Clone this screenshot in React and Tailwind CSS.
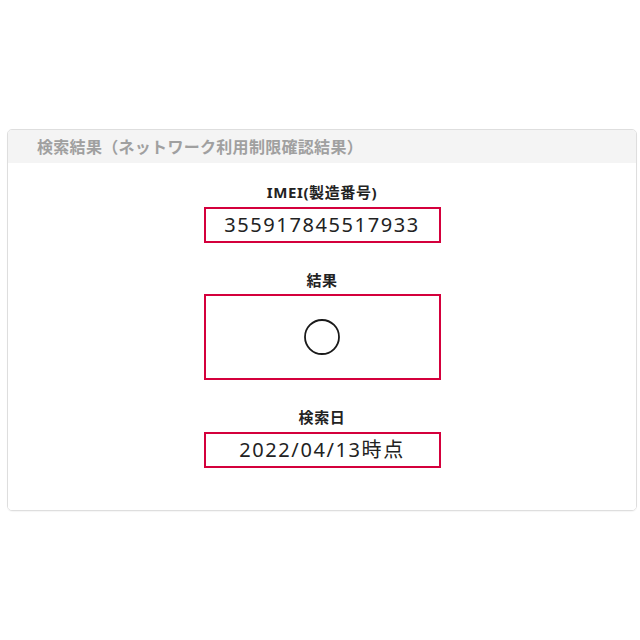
import React from "react";

const rows = [
  { label: "IMEI(製造番号)", value: "355917845517933", gap: "" },
  { label: "結果", value: null, gap: "mt-[27px]" },
  { label: "検索日", value: "2022/04/13時点", gap: "mt-[27px]" },
];

export default function App() {
  return (
    <div
      className="w-[640px] h-[640px] bg-white pt-[129px] pl-[7px]"
      style={{ fontFamily: '"Noto Sans", "Noto Sans CJK JP", sans-serif' }}
    >
      <div className="w-[630px] border border-[#dedede] rounded-[5px] overflow-hidden shadow-[0_1px_1px_rgba(0,0,0,0.04)]">
        {/* ヘッダー */}
        <div className="h-[33px] bg-[#f4f4f4] pl-[29px] flex items-center text-[16px] font-bold text-[#a0a0a0] tracking-[0.3px]">
          検索結果（ネットワーク利用制限確認結果）
        </div>

        {/* 結果 */}
        <div className="flex flex-col items-center pt-[19px] pb-[42px] bg-white">
          {rows.map((row, i) => (
            <div key={i} className={"flex flex-col items-center " + row.gap}>
              <div className="h-[20px] leading-[20px] text-[15px] font-bold text-[#222] tracking-[0.6px]">
                {row.label}
              </div>
              {row.value ? (
                <div className="mt-[5px] w-[237px] h-[36px] border-2 border-[#d4003c] flex items-center justify-center text-[20px] text-[#222] tracking-[1.6px]">
                  {row.value}
                </div>
              ) : (
                <div className="mt-[4px] w-[237px] h-[86px] border-2 border-[#d4003c] flex items-center justify-center">
                  <svg width="38" height="38" viewBox="0 0 38 38">
                    <circle cx="19" cy="19" r="17" fill="none" stroke="#1a1a1a" strokeWidth="1.8" />
                  </svg>
                </div>
              )}
            </div>
          ))}
        </div>
      </div>
    </div>
  );
}
